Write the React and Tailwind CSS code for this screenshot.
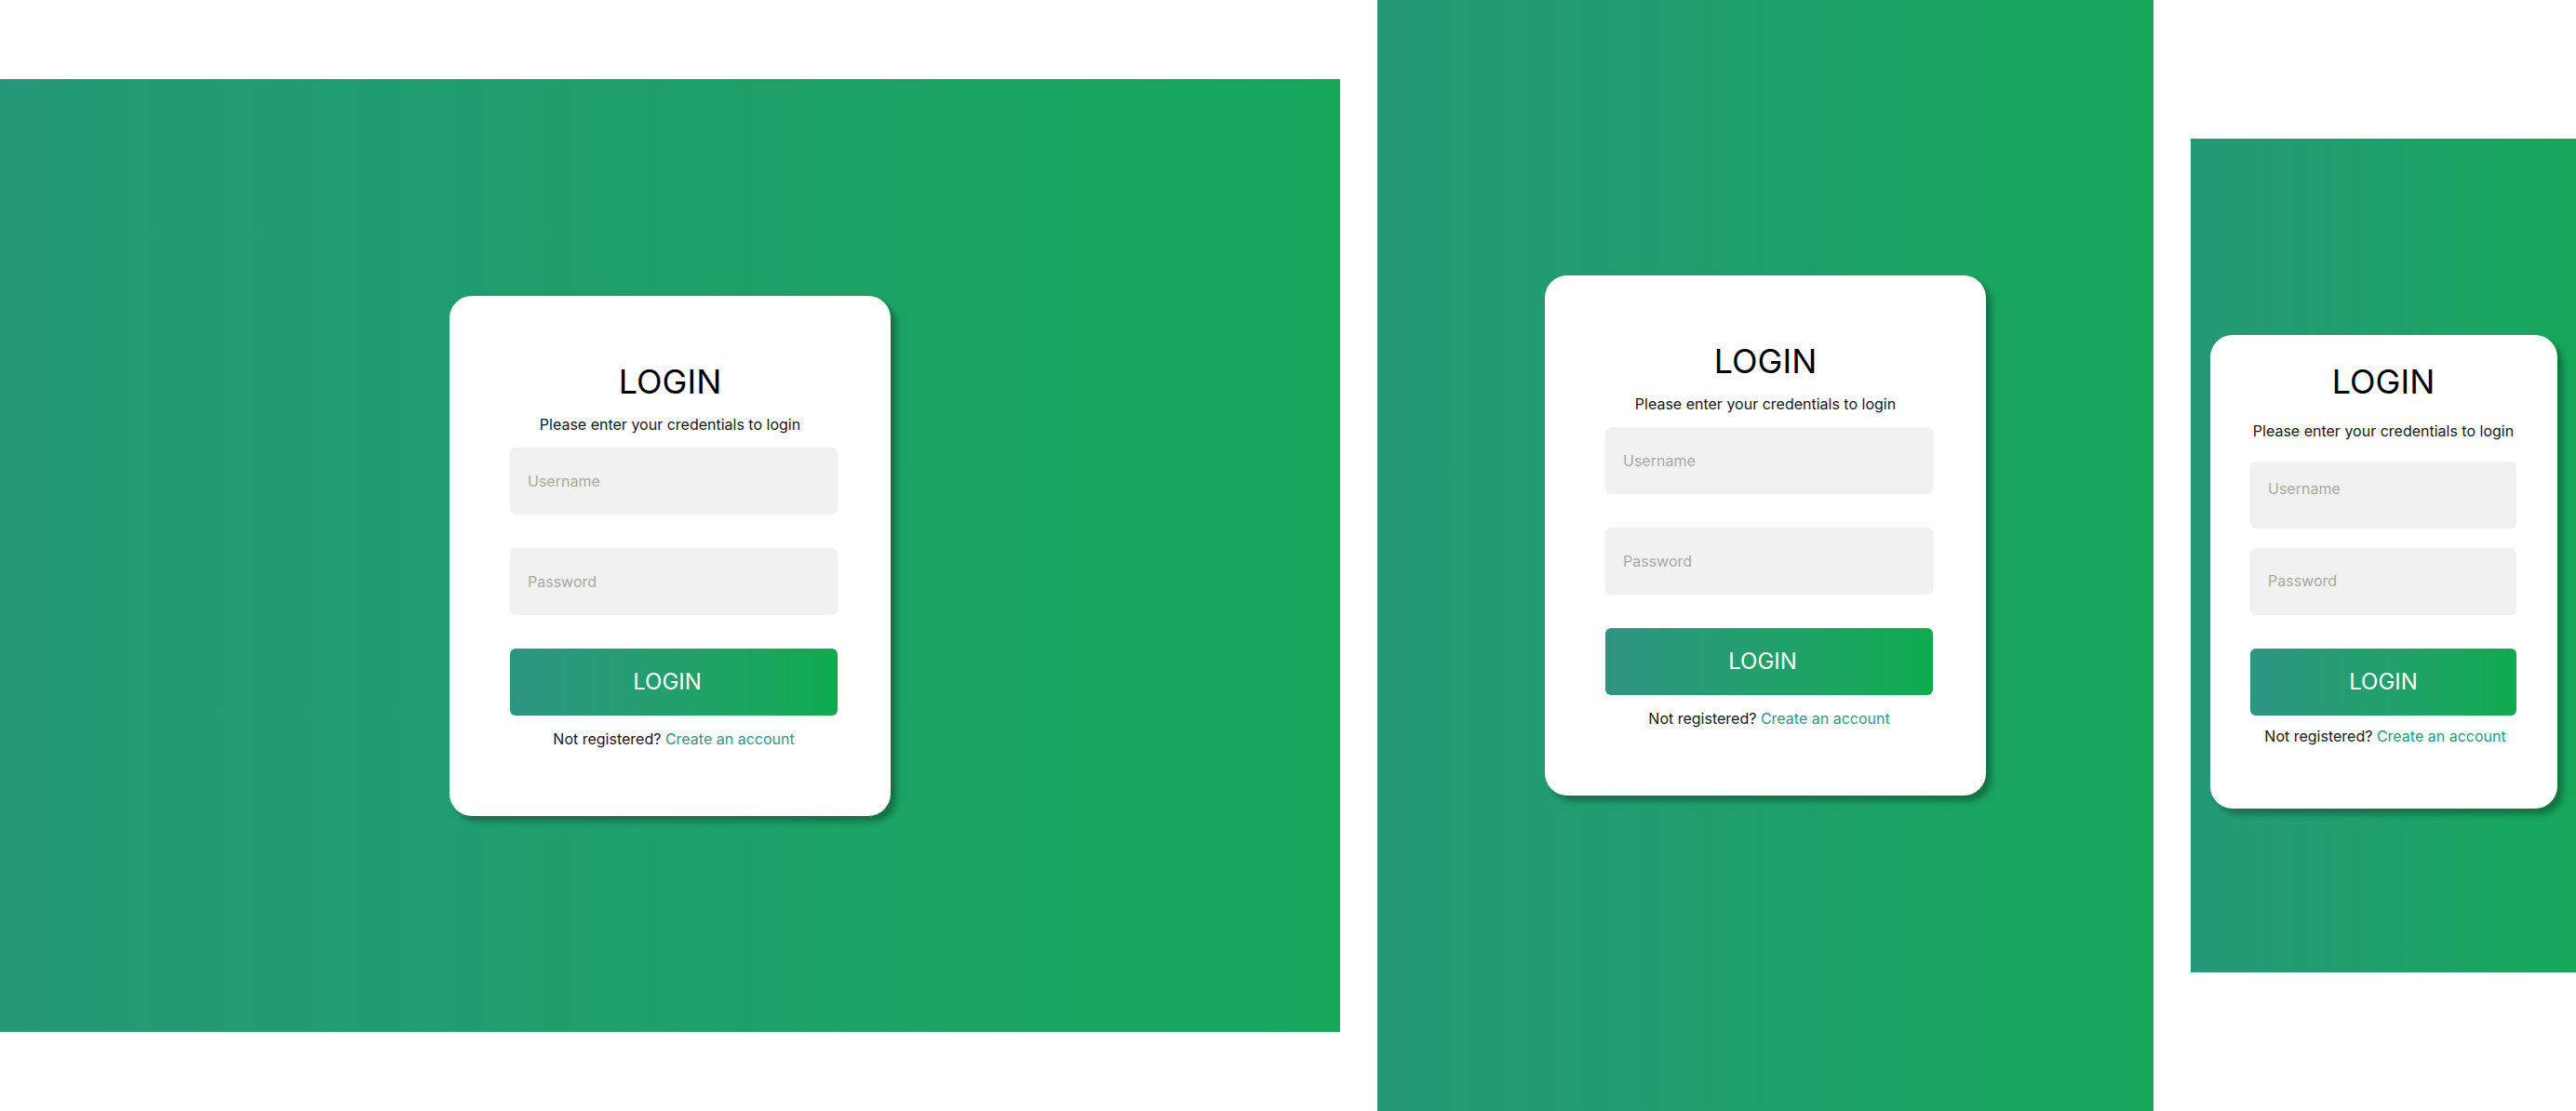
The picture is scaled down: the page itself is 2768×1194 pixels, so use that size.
import React from "react";

function Card({ mobile }) {
  const shift = mobile ? "" : " ml-[8px]";
  return (
    <div
      className={
        "bg-white rounded-[24px] shadow-[6px_6px_6px_rgba(0,0,0,0.3)] flex flex-col items-center " +
        (mobile ? "w-[373px] pt-[28px] pb-[68px]" : "w-[474px] pt-[70px] pb-[73px]")
      }
    >
      <h1 className="text-[36px] leading-[44px] font-normal text-black">LOGIN</h1>
      <p
        className={
          "text-[16px] leading-[19px] text-[#161616] " + (mobile ? "mt-[22px]" : "mt-[15px]")
        }
      >
        Please enter your credentials to login
      </p>
      <input
        type="text"
        placeholder="Username"
        className={
          "h-[72px] rounded-[6px] bg-[#f1f1f1] pl-[19px] text-[16px] outline-none placeholder:text-[#a9a99f] " +
          (mobile ? "w-[286px] mt-[23px] pb-[14px]" : "w-[352px] mt-[15px]") +
          shift
        }
      />
      <input
        type="password"
        placeholder="Password"
        className={
          "h-[72px] rounded-[6px] bg-[#f1f1f1] pl-[19px] text-[16px] outline-none placeholder:text-[#a9a99f] " +
          (mobile ? "w-[286px] mt-[21px] pb-[2px]" : "w-[352px] mt-[36px]") +
          shift
        }
      />
      <button
        className={
          "h-[72px] mt-[36px] rounded-[6px] bg-linear-to-r from-[#2e9482] to-[#0eab4f] text-white text-[24px] font-normal " +
          (mobile ? "w-[286px]" : "w-[352px] pr-[14px]") +
          shift
        }
      >
        LOGIN
      </button>
      <p
        className={
          "text-[16px] leading-[19px] text-[#161616] " +
          (mobile ? "mt-[13px] ml-[4px]" : "mt-[16px]") +
          shift
        }
      >
        Not registered? <span className="text-[#2b9a82]">Create an account</span>
      </p>
    </div>
  );
}

export default function App() {
  return (
    <div
      className="w-[2768px] h-[1194px] bg-white flex items-center gap-10 overflow-hidden"
      style={{ fontFamily: "Inter, 'Noto Sans', sans-serif" }}
    >
      <div className="w-[1440px] h-[1024px] shrink-0 bg-linear-to-r from-[#259878] to-[#16a75a] flex items-center justify-center">
        <Card />
      </div>
      <div className="w-[834px] h-[1194px] shrink-0 bg-linear-to-r from-[#259878] to-[#16a75a] flex justify-center items-start pt-[296px]">
        <Card />
      </div>
      <div className="w-[414px] h-[896px] shrink-0 bg-linear-to-r from-[#259878] to-[#16a75a] flex justify-center items-start pt-[211px]">
        <Card mobile />
      </div>
    </div>
  );
}
